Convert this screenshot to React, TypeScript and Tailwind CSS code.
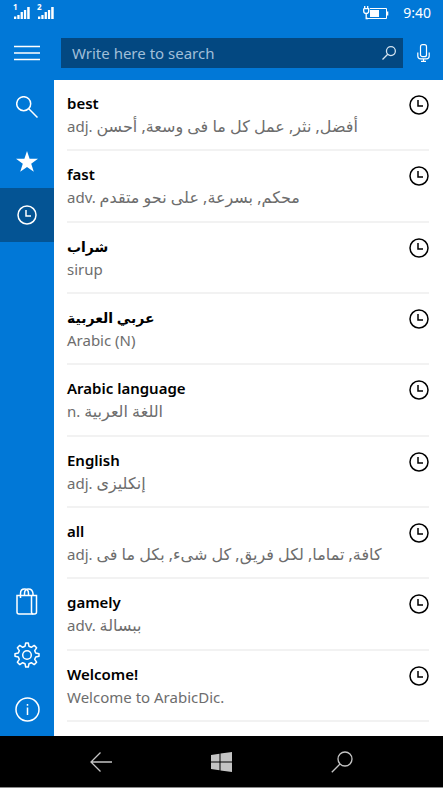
import { useState } from "react";
import type { ReactNode } from "react";

type Entry = {
  id: number;
  word: string;
  prefix?: string;
  meaning: string;
};

const ENTRIES: Entry[] = [
  { id: 1, word: "best", prefix: "adj.", meaning: "أفضل, نثر, عمل كل ما فى وسعة, أحسن" },
  { id: 2, word: "fast", prefix: "adv.", meaning: "محكم, بسرعة, على نحو متقدم" },
  { id: 3, word: "شراب", meaning: "sirup" },
  { id: 4, word: "عربي العربية", meaning: "Arabic (N)" },
  { id: 5, word: "Arabic language", prefix: "n.", meaning: "اللغة العربية" },
  { id: 6, word: "English", prefix: "adj.", meaning: "إنكليزى" },
  { id: 7, word: "all", prefix: "adj.", meaning: "كافة, تماما, لكل فريق, كل شىء, بكل ما فى" },
  { id: 8, word: "gamely", prefix: "adv.", meaning: "ببسالة" },
  { id: 9, word: "Welcome!", meaning: "Welcome to ArabicDic." },
];

const isArabic = (text: string) => /[\u0600-\u06ff]/.test(text);

function SignalIcon({ sim }: { sim: string }) {
  return (
    <div className="relative w-4">
      <svg width="16" height="12" viewBox="0 0 16 12" fill="currentColor" aria-hidden="true">
        <rect x="0" y="9.500" width="2.300" height="2.500" />
        <rect x="3.300" y="8" width="2.300" height="4" />
        <rect x="6.600" y="5" width="2.300" height="7" />
        <rect x="9.900" y="3" width="2.300" height="9" />
        <rect x="13.200" y="0" width="2.500" height="12" />
      </svg>
      <span className="absolute -top-1 -left-px text-[8px] leading-none font-bold">{sim}</span>
    </div>
  );
}

function BatteryIcon() {
  return (
    <svg width="26" height="14" viewBox="0 0 26 14" fill="none" stroke="currentColor" aria-label="Charging">
      <path d="M7 2.500H23.500V12.500H4.500" />
      <path d="M24.500 5.500v4" strokeWidth="1.600" />
      <rect x="7" y="4" width="9" height="7" fill="currentColor" stroke="none" />
      <path d="M1.700 0v2.500M4.700 0v2.500M.7 2.600h5v2.400Q5.700 7.500 3.200 7.500T.7 5V2.600M3.200 7.500V12.500H5" strokeWidth="1.300" />
    </svg>
  );
}

function ClockIcon() {
  return (
    <svg width="20" height="20" viewBox="0 0 20 20" fill="none" stroke="currentColor" strokeWidth="1.500" aria-hidden="true">
      <circle cx="10" cy="10" r="9" />
      <path d="M9 5v6h5" />
    </svg>
  );
}

function SearchIcon() {
  return (
    <svg width="22" height="22" viewBox="0 0 22 22" fill="none" stroke="currentColor" strokeWidth="1.500" aria-hidden="true">
      <circle cx="7.700" cy="7.700" r="7" />
      <path d="M12.800 12.800 21.500 21.500" />
    </svg>
  );
}

// Handle points to the lower left, as in the system glyph
function FindIcon({ size, stroke }: { size: number; stroke: number }) {
  return (
    <svg width={size} height={size} viewBox="0 0 22 22" fill="none" stroke="currentColor" strokeWidth={stroke} aria-hidden="true">
      <circle cx="14" cy="8" r="7" />
      <path d="M9 13 .8 21.200" />
    </svg>
  );
}

function StarIcon() {
  return (
    <svg width="22" height="21" viewBox="0 0 22 21" fill="currentColor" aria-hidden="true">
      <path d="M11 0l2.600 7.800H22l-6.800 5 2.600 8L11 15.900 4.200 20.800l2.600-8L0 7.800h8.400z" />
    </svg>
  );
}

function StoreIcon() {
  return (
    <svg width="22" height="27" viewBox="0 0 22 27" fill="none" stroke="currentColor" strokeWidth="1.500" aria-hidden="true">
      <path d="M1 7.500h19.500V24q0 2-2 2H3q-2 0-2-2z" />
      <path d="M15.500 7.500V24q0 2 1.800 2M4.500 10V5.500Q4.500 1 8.500 1t4 4.500V7.500M8.500 7.500V5.500Q8.500 1 12.500 1t4.500 4.500V7.500" />
    </svg>
  );
}

function GearIcon() {
  return (
    <svg width="26" height="26" viewBox="0 0 26 26" fill="none" stroke="currentColor" strokeWidth="1.500" strokeLinejoin="round" aria-hidden="true">
      <circle cx="13" cy="13" r="4.300" />
      <path d="M11.700 1h2.600l.7 3.300 2.300 1 2.900-1.900 2.400 2.400-1.900 2.900 1 2.300 3.300.7v2.600l-3.300.7-1 2.300 1.900 2.900-2.400 2.400-2.900-1.900-2.300 1-.7 3.300h-2.600l-.7-3.300-2.300-1-2.900 1.900-2.400-2.400 1.900-2.900-1-2.300L1 14.300v-2.600l3.300-.7 1-2.300-1.900-2.900 2.400-2.400 2.900 1.900 2.300-1z" />
    </svg>
  );
}

function InfoIcon() {
  return (
    <svg width="25" height="25" viewBox="0 0 25 25" fill="none" stroke="currentColor" strokeWidth="1.500" aria-hidden="true">
      <circle cx="12.500" cy="12.500" r="11.500" />
      <path d="M12.500 10.500V18M12.500 7v1.700" />
    </svg>
  );
}

function MicIcon() {
  return (
    <svg width="13" height="18" viewBox="0 0 13 18" fill="none" stroke="currentColor" strokeWidth="1.200" aria-hidden="true">
      <rect x="3.500" y=".7" width="6" height="12" rx="2" />
      <path d="M.8 8.500V12q0 2.800 2.800 2.800h5.800q2.800 0 2.800-2.800V8.500M6.500 14.800v2.500M4 17.300h5" />
    </svg>
  );
}

type NavButtonProps = {
  label: string;
  active?: boolean;
  onClick?: () => void;
  children: ReactNode;
};

function NavButton({ label, active, onClick, children }: NavButtonProps) {
  return (
    <button
      type="button"
      aria-label={label}
      onClick={onClick}
      className={`grid h-[54px] w-full place-items-center ${active ? "bg-[#045494]" : ""}`}
    >
      {children}
    </button>
  );
}

function EntryRow({ entry }: { entry: Entry }) {
  return (
    <li className="flex items-start justify-between border-b-2 border-[#f2f2f2] pt-3">
      <div className="min-w-0">
        <h2 className={`h-[23px] leading-[23px] font-semibold whitespace-nowrap text-black ${isArabic(entry.word) ? "text-sm" : "text-[15px]"}`}>
          {entry.word}
        </h2>
        <p className="h-[23px] text-[15px] leading-[23px] whitespace-nowrap text-[#6d6d6d]">
          {entry.prefix && <span>{entry.prefix} </span>}
          <span className={isArabic(entry.meaning) ? "text-base leading-[23px]" : ""}>{entry.meaning}</span>
        </p>
      </div>
      <button type="button" aria-label={`History of ${entry.word}`} className="mt-[3px] text-black">
        <ClockIcon />
      </button>
    </li>
  );
}

export default function App() {
  const [tab, setTab] = useState("history");
  const [query, setQuery] = useState("");

  return (
    <div className="flex min-h-screen flex-col bg-[#0178d7] font-['Noto_Sans','DejaVu_Sans',sans-serif] text-white">
      <div className="flex h-[26px] items-center justify-between pr-3 pl-3.5">
        <div className="flex gap-2">
          <SignalIcon sim="1" />
          <SignalIcon sim="2" />
        </div>
        <div className="flex items-center gap-3.5 text-sm leading-5">
          <BatteryIcon />
          <span>9:40</span>
        </div>
      </div>

      <header className="flex h-[54px] items-center">
        <button type="button" aria-label="Menu" className="grid w-[54px] place-items-center">
          <svg width="26" height="16" viewBox="0 0 26 16" stroke="currentColor" strokeWidth="1.700" aria-hidden="true">
            <path d="M0 1.500h26M0 8h26M0 14.500h26" />
          </svg>
        </button>
        <form className="ml-[7px] flex h-[30px] flex-1 items-center bg-[#034881] pr-[7px] pl-[11px]" onSubmit={(e) => e.preventDefault()}>
          <input
            type="text"
            aria-label="Search"
            placeholder="Write here to search"
            value={query}
            onChange={(e) => setQuery(e.target.value)}
            className="min-w-0 flex-1 bg-transparent text-[15px] leading-6 outline-none placeholder:text-[#a0bfd9]"
          />
          <button type="submit" aria-label="Find" className="text-[#d5e4f0]">
            <FindIcon size={14} stroke={2} />
          </button>
        </form>
        <button type="button" aria-label="Voice search" className="grid w-10 place-items-center">
          <MicIcon />
        </button>
      </header>

      <div className="flex flex-1">
        <nav className="flex w-[54px] shrink-0 flex-col justify-between">
          <div>
            <NavButton label="Search" active={tab === "search"} onClick={() => setTab("search")}>
              <SearchIcon />
            </NavButton>
            <NavButton label="Favorites" active={tab === "favorites"} onClick={() => setTab("favorites")}>
              <StarIcon />
            </NavButton>
            <NavButton label="History" active={tab === "history"} onClick={() => setTab("history")}>
              <ClockIcon />
            </NavButton>
          </div>
          <div>
            <NavButton label="Store">
              <StoreIcon />
            </NavButton>
            <NavButton label="Settings">
              <GearIcon />
            </NavButton>
            <NavButton label="About">
              <InfoIcon />
            </NavButton>
          </div>
        </nav>
        <main className="flex min-w-0 flex-1 bg-white pr-3.5 pb-3.5 pl-[13px]">
          <ul className="grid flex-1 auto-rows-fr">
            {ENTRIES.map((entry) => (
              <EntryRow key={entry.id} entry={entry} />
            ))}
          </ul>
        </main>
      </div>

      <footer className="flex h-[52px] items-center justify-around border-b border-[#8a8a8a] bg-black px-10 text-[#c4c4c4]">
        <button type="button" aria-label="Back">
          <svg width="22" height="20" viewBox="0 0 22 20" fill="none" stroke="currentColor" strokeWidth="1.300" aria-hidden="true">
            <path d="M10.500.5 1 10l9.500 9.500M1 10h21" />
          </svg>
        </button>
        <button type="button" aria-label="Start">
          <svg width="21" height="20" viewBox="0 0 21 20" fill="currentColor" aria-hidden="true">
            <path d="M0 3l8.500-1.200v7.700H0zM9.500 1.600 21 0v9.500H9.500zM0 10.500h8.500v7.700L0 17zM9.500 10.500H21V20L9.500 18.400z" />
          </svg>
        </button>
        <button type="button" aria-label="System search">
          <FindIcon size={22} stroke={1.3} />
        </button>
      </footer>
    </div>
  );
}
